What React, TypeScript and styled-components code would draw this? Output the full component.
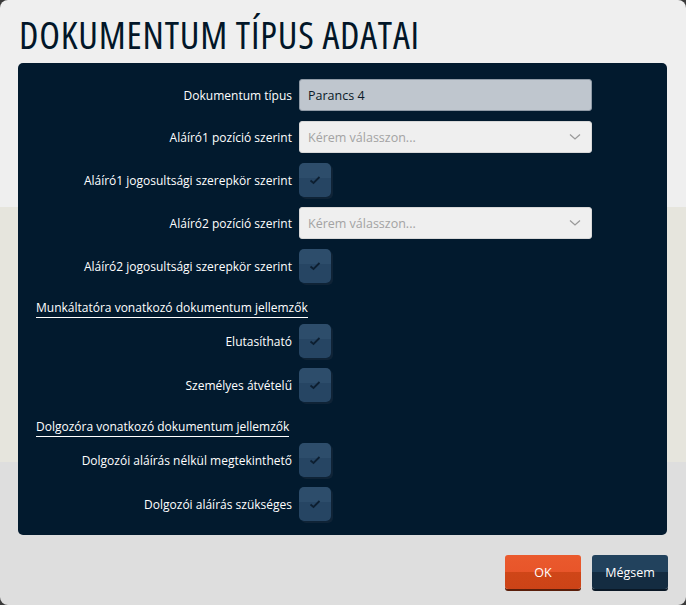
import React from 'react';
import styled, { createGlobalStyle } from 'styled-components';

const GlobalStyle = createGlobalStyle`
  html, body {
    margin: 0;
    padding: 0;
    background: #3b3b3b;
  }
  body {
    font-family: 'Open Sans', 'Liberation Sans', sans-serif;
  }
`;

const Modal = styled.div`
  width: 686px;
  height: 605px;
  box-sizing: border-box;
  border-radius: 8px;
  background: linear-gradient(
    to bottom,
    #efefef 0px,
    #efefef 207px,
    #e6e5dd 207px,
    #e6e5dd 462px,
    #dedede 462px
  );
  padding: 14px 19px 0 18px;
  display: flex;
  flex-direction: column;
`;

const Title = styled.h1`
  margin: 0 0 0 1px;
  font-size: 38px;
  font-weight: 400;
  font-stretch: 75%;
  letter-spacing: 0.8px;
  line-height: 40px;
  color: #021628;
  height: 49px;
`;

const Panel = styled.div`
  background: #021a2e;
  border-radius: 5px;
  height: 472px;
  box-sizing: border-box;
  padding: 16px 17px 0 17px;
  display: flex;
  flex-direction: column;
`;

const Row = styled.div`
  display: flex;
  align-items: center;
  margin-bottom: 10px;
`;

const Label = styled.div`
  width: 257px;
  flex-shrink: 0;
  text-align: right;
  padding-right: 7px;
  color: #ffffff;
  font-size: 12px;
  white-space: nowrap;
`;

const Field = styled.div<{ $disabled?: boolean }>`
  width: 293px;
  height: 32px;
  box-sizing: border-box;
  border-radius: 3px;
  border: 1px solid ${({ $disabled }) => ($disabled ? '#8f9aa6' : '#d8d8d8')};
  background: ${({ $disabled }) => ($disabled ? '#bfc6ce' : '#efefef')};
  display: flex;
  align-items: center;
  padding: 0 10px 0 8px;
  font-size: 12.5px;
  color: #0b1a28;
`;

const Placeholder = styled.span`
  flex: 1;
  color: #a3a3a3;
`;

const Chevron = () => (
  <svg width="12" height="8" viewBox="0 0 12 8">
    <path d="M1 1.5 L6 6 L11 1.5" fill="none" stroke="#9a9a9a" strokeWidth="1.3" />
  </svg>
);

const Check = styled.div`
  width: 32px;
  height: 34px;
  box-sizing: border-box;
  border-radius: 5px;
  background: linear-gradient(to bottom, #2d4d6b 0%, #2d4d6b 45%, #264563 45%, #264563 100%);
  box-shadow: 2px 2px 0 #0f2336;
  display: flex;
  align-items: center;
  justify-content: center;
`;

const CheckMark = () => (
  <svg width="12" height="10" viewBox="0 0 12 10">
    <path d="M1.5 5.5 L4.5 8 L10.5 2" fill="none" stroke="#0d1f31" strokeWidth="1.8" />
  </svg>
);

const SectionTitle = styled.div`
  align-self: flex-start;
  color: #ffffff;
  font-size: 12px;
  line-height: 16px;
  border-bottom: 1px solid #ffffff;
  padding-bottom: 1px;
  margin: 7px 0 6px 1px;
`;

const Footer = styled.div`
  display: flex;
  justify-content: flex-end;
  gap: 11px;
  margin-top: 20px;
  margin-right: -1px;
`;

const Button = styled.button<{ $primary?: boolean }>`
  width: 76px;
  height: 34px;
  border: none;
  border-radius: 3px;
  font-family: inherit;
  font-size: 12.5px;
  color: #ffffff;
  cursor: pointer;
  background: ${({ $primary }) =>
    $primary
      ? 'linear-gradient(to bottom, #ea5a2d 0%, #e8552a 50%, #cf4618 50%, #cc4317 100%)'
      : 'linear-gradient(to bottom, #22425d 0%, #22425d 50%, #142c41 50%, #142c41 100%)'};
  box-shadow: ${({ $primary }) => ($primary ? '0 2px 0 #5a1e0a' : '0 2px 0 #0a1826')};
`;

const SelectField = () => (
  <Field>
    <Placeholder>Kérem válasszon...</Placeholder>
    <Chevron />
  </Field>
);

export default function App() {
  return (
    <>
      <GlobalStyle />
      <Modal>
        <Title>DOKUMENTUM TÍPUS ADATAI</Title>
        <Panel>
          <Row>
            <Label>Dokumentum típus</Label>
            <Field $disabled>Parancs 4</Field>
          </Row>
          <Row>
            <Label>Aláíró1 pozíció szerint</Label>
            <SelectField />
          </Row>
          <Row>
            <Label>Aláíró1 jogosultsági szerepkör szerint</Label>
            <Check><CheckMark /></Check>
          </Row>
          <Row>
            <Label>Aláíró2 pozíció szerint</Label>
            <SelectField />
          </Row>
          <Row>
            <Label>Aláíró2 jogosultsági szerepkör szerint</Label>
            <Check><CheckMark /></Check>
          </Row>
          <SectionTitle>Munkáltatóra vonatkozó dokumentum jellemzők</SectionTitle>
          <Row>
            <Label>Elutasítható</Label>
            <Check><CheckMark /></Check>
          </Row>
          <Row>
            <Label>Személyes átvételű</Label>
            <Check><CheckMark /></Check>
          </Row>
          <SectionTitle>Dolgozóra vonatkozó dokumentum jellemzők</SectionTitle>
          <Row>
            <Label>Dolgozói aláírás nélkül megtekinthető</Label>
            <Check><CheckMark /></Check>
          </Row>
          <Row>
            <Label>Dolgozói aláírás szükséges</Label>
            <Check><CheckMark /></Check>
          </Row>
        </Panel>
        <Footer>
          <Button $primary>OK</Button>
          <Button>Mégsem</Button>
        </Footer>
      </Modal>
    </>
  );
}
